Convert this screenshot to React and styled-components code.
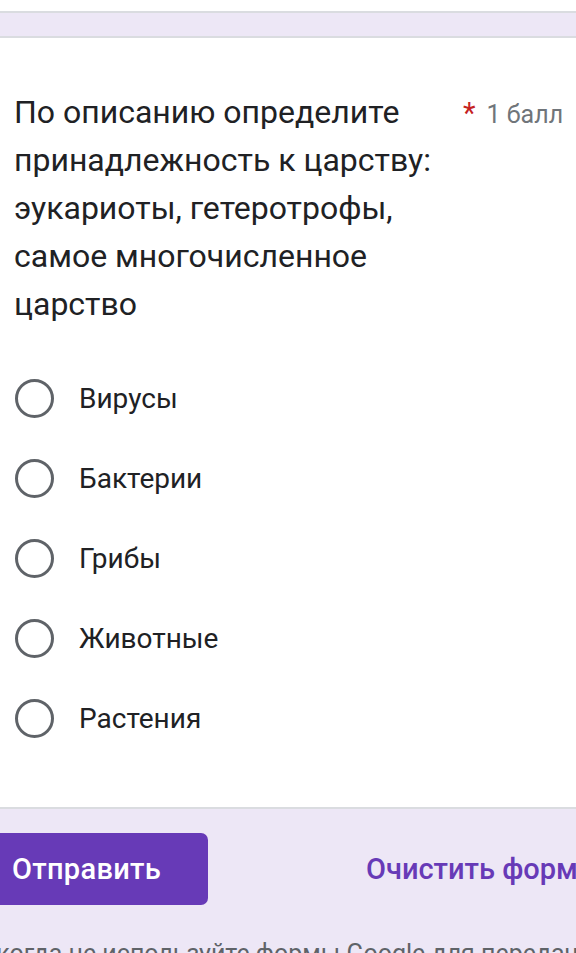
import React from "react";
import styled, { createGlobalStyle } from "styled-components";

const GlobalStyle = createGlobalStyle`
  html, body {
    margin: 0;
    padding: 0;
    background: #ede7f6;
    overflow: hidden;
    width: 576px;
    height: 953px;
  }
  body {
    font-family: Roboto, "Noto Sans", Arial, sans-serif;
    -webkit-font-smoothing: antialiased;
  }
`;

const Page = styled.div`
  display: flex;
  flex-direction: column;
  width: 576px;
  overflow: hidden;
`;

const PrevCardEdge = styled.div`
  height: 11px;
  background: #ffffff;
  border-bottom: 2px solid #dadce0;
`;

const Card = styled.section`
  margin-top: 23px;
  background: #ffffff;
  border-top: 2px solid #dadce0;
  border-bottom: 2px solid #dadce0;
  padding: 50px 14px 49px 14px;
  display: flex;
  flex-direction: column;
`;

const Header = styled.div`
  display: flex;
  align-items: baseline;
`;

const Title = styled.div`
  width: 440px;
  flex: none;
  font-size: 32px;
  line-height: 48px;
  color: #202124;
  font-weight: 400;
`;

const Star = styled.span`
  margin-left: 9px;
  color: #c5221f;
  font-size: 29px;
  font-weight: 400;
`;

const Points = styled.span`
  margin-left: 11px;
  color: #70757a;
  font-size: 25px;
  white-space: nowrap;
`;

const Options = styled.div`
  margin-top: 30px;
  display: flex;
  flex-direction: column;
`;

const OptionRow = styled.label`
  height: 80px;
  display: flex;
  align-items: center;
  gap: 25px;
`;

const Radio = styled.span`
  box-sizing: border-box;
  width: 39px;
  height: 39px;
  margin-left: 1px;
  border-radius: 50%;
  border: 3.5px solid #5f6368;
  flex: none;
`;

const OptionText = styled.span`
  font-size: 28px;
  color: #202124;
`;

const Footer = styled.div`
  display: flex;
  flex-direction: column;
`;

const ButtonRow = styled.div`
  margin-top: 24px;
  margin-left: -24px;
  display: flex;
  align-items: center;
  gap: 158px;
  white-space: nowrap;
`;

const SubmitButton = styled.button`
  box-sizing: border-box;
  flex: none;
  width: 232px;
  height: 72px;
  padding: 0 0 0 36px;
  border: none;
  border-radius: 7px;
  background: #673ab7;
  color: #ffffff;
  font-family: Roboto, "Noto Sans", Arial, sans-serif;
  font-size: 29px;
  font-weight: 500;
  text-align: left;
  letter-spacing: 0.3px;
`;

const ClearButton = styled.button`
  flex: none;
  padding: 0;
  border: none;
  background: transparent;
  color: #673ab7;
  font-family: Roboto, "Noto Sans", Arial, sans-serif;
  font-size: 29px;
  font-weight: 500;
  white-space: nowrap;
`;

const Notice = styled.div`
  margin-top: 34px;
  margin-left: -36px;
  font-size: 25px;
  line-height: 30px;
  color: #5f6368;
  white-space: nowrap;
`;

const options = ["Вирусы", "Бактерии", "Грибы", "Животные", "Растения"];

export default function App() {
  return (
    <>
      <GlobalStyle />
      <Page>
        <PrevCardEdge />
        <Card>
          <Header>
            <Title>
              По описанию определите принадлежность к царству: эукариоты,
              гетеротрофы, самое многочисленное царство
            </Title>
            <Star>*</Star>
            <Points>1 балл</Points>
          </Header>
          <Options>
            {options.map((o) => (
              <OptionRow key={o}>
                <Radio />
                <OptionText>{o}</OptionText>
              </OptionRow>
            ))}
          </Options>
        </Card>
        <Footer>
          <ButtonRow>
            <SubmitButton>Отправить</SubmitButton>
            <ClearButton>Очистить форму</ClearButton>
          </ButtonRow>
          <Notice>Никогда не используйте формы Google для передачи паролей.</Notice>
        </Footer>
      </Page>
    </>
  );
}
